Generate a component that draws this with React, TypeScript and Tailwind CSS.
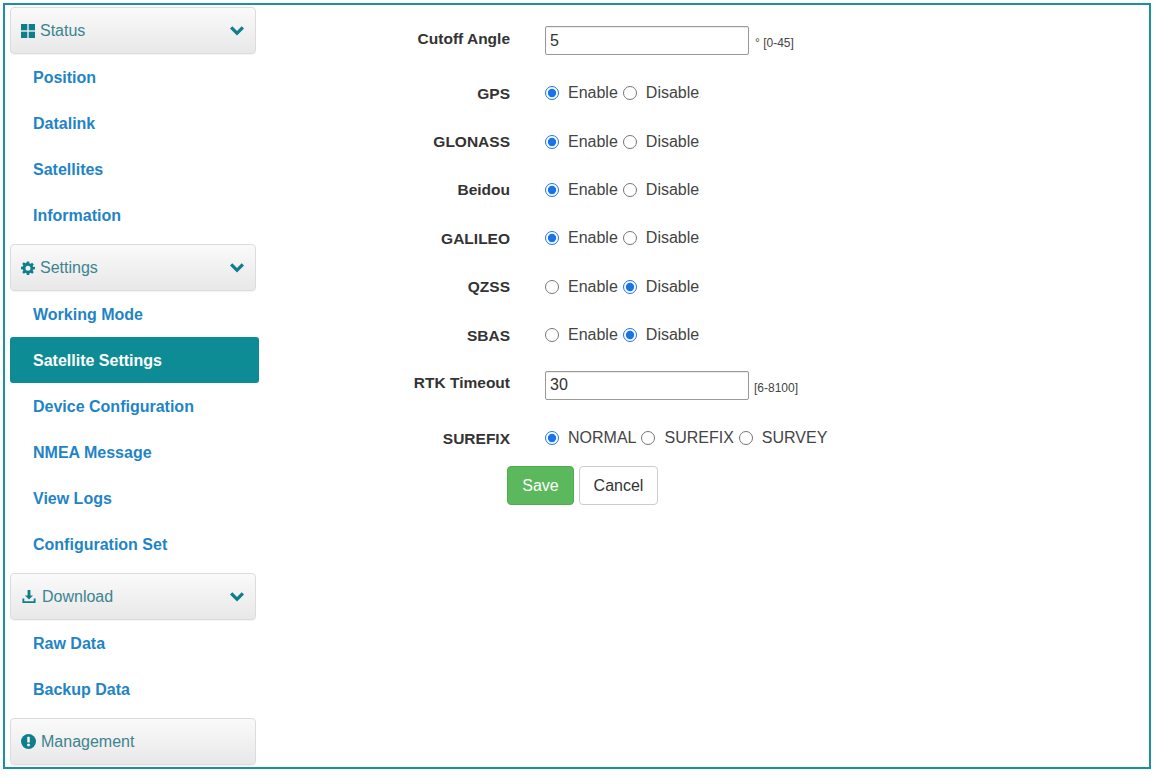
import { useState } from 'react'

const teal = 'text-[#0e7f8a]'

function GridIcon() {
  return (
    <svg viewBox="0 0 14 14" className="w-[14px] h-[14px]">
      <rect x="0" y="0" width="6.3" height="6.3" fill="currentColor" />
      <rect x="7.7" y="0" width="6.3" height="6.3" fill="currentColor" />
      <rect x="0" y="7.7" width="6.3" height="6.3" fill="currentColor" />
      <rect x="7.7" y="7.7" width="6.3" height="6.3" fill="currentColor" />
    </svg>
  )
}

function CogIcon() {
  return (
    <svg viewBox="0 0 24 24" className="w-[14px] h-[14px]">
      <path
        fill="currentColor"
        fillRule="evenodd"
        d="M10 1h4l.6 3.1 1.9.8 2.6-1.8 2.8 2.8-1.8 2.6.8 1.9L24 10v4l-3.1.6-.8 1.9 1.8 2.6-2.8 2.8-2.6-1.8-1.9.8L14 24h-4l-.6-3.1-1.9-.8-2.6 1.8-2.8-2.8 1.8-2.6-.8-1.9L0 14v-4l3.1-.6.8-1.9-1.8-2.6 2.8-2.8 2.6 1.8 1.9-.8zM12 8.2a4.3 4.3 0 1 0 0 8.6 4.3 4.3 0 1 0 0-8.6z"
      />
    </svg>
  )
}

function DownloadIcon() {
  return (
    <svg viewBox="0 0 16 16" className="w-[16px] h-[15px]">
      <path fill="currentColor" d="M6.5 1h3v6h2.8L8 11.3 3.7 7h2.8z" />
      <path fill="currentColor" d="M1 10h2v3h10v-3h2v5H1z" />
    </svg>
  )
}

function InfoIcon() {
  return (
    <svg viewBox="0 0 16 16" className="w-[15px] h-[15px]">
      <circle cx="8" cy="8" r="8" fill="currentColor" />
      <rect x="6.7" y="3" width="2.6" height="6" rx="0.6" fill="white" />
      <rect x="6.7" y="10.4" width="2.6" height="2.6" rx="0.6" fill="white" />
    </svg>
  )
}

function Chevron() {
  return (
    <svg viewBox="0 0 14 10" className="w-[14px] h-[10px]">
      <path fill="currentColor" d="M0 2.6 2.3.3 7 5 11.7.3 14 2.6 7 9.6z" />
    </svg>
  )
}

function PanelHeader({ icon, title, chevron = true, first }: { icon: React.ReactNode; title: string; chevron?: boolean; first?: boolean }) {
  return (
    <div
      className={`${first ? '' : 'mt-[6px]'} ml-[5px] w-[246px] h-[47px] shrink-0 flex items-center justify-between pl-[10px] pr-[11px] rounded-[4px] border border-[#dcdcdc] bg-gradient-to-b from-[#fafafa] to-[#e8e8e8] shadow-[0_1px_1px_rgba(0,0,0,0.05)]`}
    >
      <div className="flex items-center gap-[5px]">
        <span className={teal}>{icon}</span>
        <span className="text-[16px] text-[#3b8490]">{title}</span>
      </div>
      {chevron && <span className={teal}><Chevron /></span>}
    </div>
  )
}

function NavItem({ label, active }: { label: string; active?: boolean }) {
  return active ? (
    <div className="ml-[5px] w-[249px] h-[46px] shrink-0 flex items-center pt-[2px] pl-[23px] rounded-[3px] bg-[#0e8c95] text-white font-bold text-[16px]">
      {label}
    </div>
  ) : (
    <div className="h-[46px] shrink-0 flex items-center pt-[2px] pl-[28px] text-[#1f84c6] font-bold text-[16px]">{label}</div>
  )
}

function Radio({ name, value, checked, onChange, label }: { name: string; value: string; checked: boolean; onChange: (v: string) => void; label: string }) {
  return (
    <label className="flex items-center">
      <input
        type="radio"
        name={name}
        checked={checked}
        onChange={() => onChange(value)}
        className="m-0 w-[14px] h-[14px] accent-[#1a73e8]"
      />
      <span className="ml-[9px] mr-[5px] text-[16px] text-[#444]">{label}</span>
    </label>
  )
}

function RadioRow({ label, options, initial }: { label: string; options: string[]; initial: string }) {
  const [val, setVal] = useState(initial)
  return (
    <div className="flex items-center h-[48.4px] pt-[2px]">
      <div className="w-[283px] pr-[35px] text-right font-bold text-[15.5px] text-[#333]">{label}</div>
      <div className="flex items-center">
        {options.map((o) => (
          <Radio key={o} name={label} value={o} checked={val === o} onChange={setVal} label={o} />
        ))}
      </div>
    </div>
  )
}

export default function App() {
  return (
    <div className="p-[3px] bg-white" style={{ fontFamily: '"Liberation Sans", Arial, sans-serif' }}>
      <div className="w-[1148px] h-[766px] border-2 border-[#1a9299] flex bg-white">
        {/* Sidebar */}
        <div className="w-[257px] pt-[2px] flex flex-col">
          <PanelHeader icon={<GridIcon />} title="Status" first />
          <NavItem label="Position" />
          <NavItem label="Datalink" />
          <NavItem label="Satellites" />
          <NavItem label="Information" />
          <PanelHeader icon={<CogIcon />} title="Settings" />
          <NavItem label="Working Mode" />
          <NavItem label="Satellite Settings" active />
          <NavItem label="Device Configuration" />
          <NavItem label="NMEA Message" />
          <NavItem label="View Logs" />
          <NavItem label="Configuration Set" />
          <PanelHeader icon={<DownloadIcon />} title="Download" />
          <NavItem label="Raw Data" />
          <NavItem label="Backup Data" />
          <PanelHeader icon={<InfoIcon />} title="Management" chevron={false} />
        </div>

        {/* Form */}
        <div className="flex-1 pt-[21px]">
          <div className="flex items-start h-[42px]">
            <div className="w-[283px] pr-[35px] pt-[1px] text-right font-bold text-[15.5px] text-[#333]">Cutoff Angle</div>
            <input
              defaultValue="5"
              className="w-[204px] h-[29px] px-[4px] border border-[#999] rounded-[2px] text-[16px] text-[#333] shadow-[inset_0_1px_1px_rgba(0,0,0,0.08)] outline-none"
            />
            <span className="ml-[6px] mt-[8px] text-[12px] text-[#444]">° [0-45]</span>
          </div>
          <RadioRow label="GPS" options={['Enable', 'Disable']} initial="Enable" />
          <RadioRow label="GLONASS" options={['Enable', 'Disable']} initial="Enable" />
          <RadioRow label="Beidou" options={['Enable', 'Disable']} initial="Enable" />
          <RadioRow label="GALILEO" options={['Enable', 'Disable']} initial="Enable" />
          <RadioRow label="QZSS" options={['Enable', 'Disable']} initial="Disable" />
          <RadioRow label="SBAS" options={['Enable', 'Disable']} initial="Disable" />
          <div className="flex items-start mt-[12.6px] h-[42px]">
            <div className="w-[283px] pr-[35px] text-right font-bold text-[15.5px] text-[#333]">RTK Timeout</div>
            <input
              defaultValue="30"
              className="w-[204px] h-[29px] px-[4px] border border-[#999] rounded-[2px] text-[16px] text-[#333] shadow-[inset_0_1px_1px_rgba(0,0,0,0.08)] outline-none"
            />
            <span className="ml-[5px] mt-[8px] text-[12px] text-[#444]">[6-8100]</span>
          </div>
          <RadioRow label="SUREFIX" options={['NORMAL', 'SUREFIX', 'SURVEY']} initial="NORMAL" />
          <div className="flex gap-[5px] ml-[245px] mt-[5px]">
            <button className="w-[67px] h-[39px] rounded-[4px] bg-[#5cb85c] border border-[#4cae4c] text-white text-[16px]">Save</button>
            <button className="w-[79px] h-[39px] rounded-[4px] bg-white border border-[#ccc] text-[#333] text-[16px]">Cancel</button>
          </div>
        </div>
      </div>
    </div>
  )
}
